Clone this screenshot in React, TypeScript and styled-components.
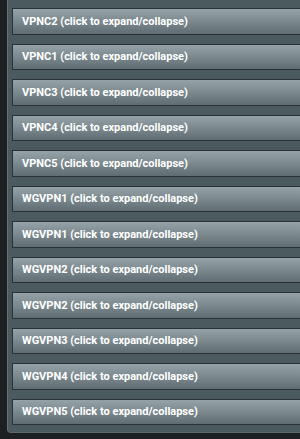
import React from 'react';
import styled, { createGlobalStyle } from 'styled-components';

const GlobalStyle = createGlobalStyle`
  html, body {
    margin: 0;
    padding: 0;
    background: #24292b;
    overflow: hidden;
  }
  body {
    font-family: Roboto, "Liberation Sans", Arial, sans-serif;
  }
`;

const Page = styled.div`
  width: 300px;
  height: 439px;
  overflow: hidden;
  background: #1d2022;
`;

const Panel = styled.div`
  margin-left: 7px;
  width: 320px;
  height: 433px;
  box-sizing: border-box;
  background: #4b5a5f;
  border-left: 1px solid #657276;
  border-bottom: 1px solid #5b676b;
  border-bottom-left-radius: 4px;
  padding: 8px 0 0 4px;
  display: flex;
  flex-direction: column;
  gap: 9px;
`;

const Bar = styled.div`
  height: 26.5px;
  box-sizing: border-box;
  border: 1px solid #2a3235;
  background: linear-gradient(to bottom, #95a3a8 0%, #7b898e 50%, #5f6c71 100%);
  display: flex;
  align-items: center;
  padding-left: 9px;
  color: #ffffff;
  font-size: 11px;
  font-weight: bold;
  white-space: nowrap;
  cursor: pointer;
`;

const sections = [
  'VPNC2',
  'VPNC1',
  'VPNC3',
  'VPNC4',
  'VPNC5',
  'WGVPN1',
  'WGVPN1',
  'WGVPN2',
  'WGVPN2',
  'WGVPN3',
  'WGVPN4',
  'WGVPN5',
];

export default function App() {
  return (
    <Page>
      <GlobalStyle />
      <Panel>
        {sections.map((name, i) => (
          <Bar key={i}>{name} (click to expand/collapse)</Bar>
        ))}
      </Panel>
    </Page>
  );
}
